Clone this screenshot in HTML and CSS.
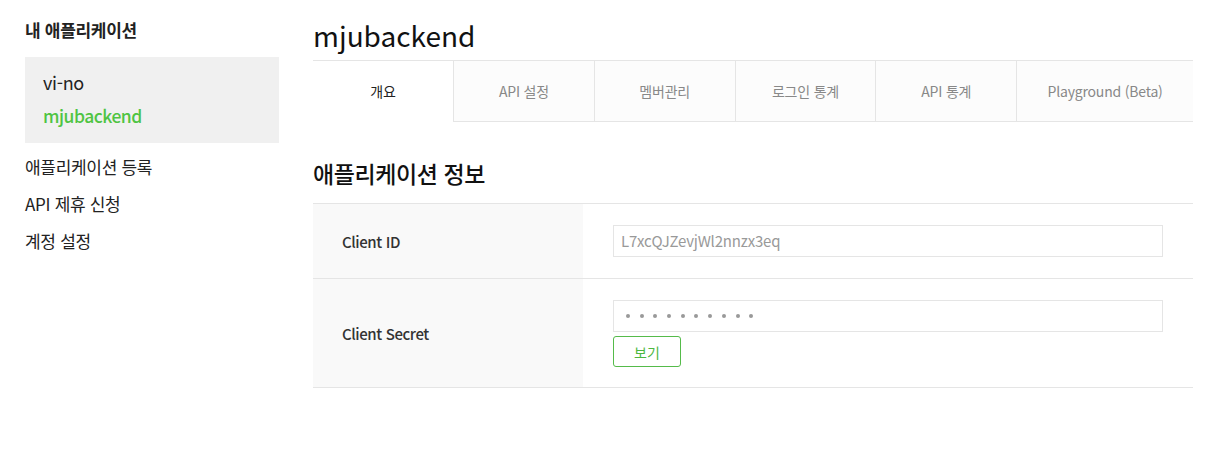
FILE: index.html
```html
<!DOCTYPE html>
<html lang="ko">
<head>
<meta charset="utf-8">
<title>mjubackend</title>
<link rel="stylesheet" href="styles.css">
</head>
<body>
<div class="page">
  <aside class="sidebar">
    <h2 class="side-title">내 애플리케이션</h2>
    <div class="app-box">
      <div class="app-item">vi-no</div>
      <div class="app-item active">mjubackend</div>
    </div>
    <ul class="side-menu">
      <li>애플리케이션 등록</li>
      <li>API 제휴 신청</li>
      <li>계정 설정</li>
    </ul>
  </aside>
  <main class="main">
    <h1 class="app-title">mjubackend</h1>
    <ul class="tabs">
      <li class="tab active">개요</li>
      <li class="tab">API 설정</li>
      <li class="tab">멤버관리</li>
      <li class="tab">로그인 통계</li>
      <li class="tab">API 통계</li>
      <li class="tab last">Playground (Beta)</li>
    </ul>
    <h2 class="section-title">애플리케이션 정보</h2>
    <div class="info-table">
      <div class="row row-id">
        <div class="label">Client ID</div>
        <div class="value">
          <div class="field">L7xcQJZevjWl2nnzx3eq</div>
        </div>
      </div>
      <div class="row row-secret">
        <div class="label">Client Secret</div>
        <div class="value">
          <div class="field dots">
            <span></span><span></span><span></span><span></span><span></span><span></span><span></span><span></span><span></span><span></span>
          </div>
          <button class="show-btn" type="button">보기</button>
        </div>
      </div>
    </div>
  </main>
</div>
</body>
</html>
```
FILE: styles.css
```css
* { box-sizing: border-box; }
html, body { margin: 0; padding: 0; background: #fff; }
body {
  font-family: "Noto Sans CJK KR", "Noto Sans", sans-serif;
  color: #222;
}
.page {
  display: flex;
  width: 1228px;
}
.sidebar {
  width: 279px;
  padding-left: 25px;
  flex: none;
}
.side-title {
  margin: 20px 0 0;
  font-size: 17px;
  line-height: 20px;
  font-weight: 700;
  color: #222;
  letter-spacing: -0.3px;
}
.app-box {
  margin-top: 17px;
  background: #f0f0f0;
  padding: 8px 18px 10px;
  height: 86px;
}
.app-item {
  font-size: 18px;
  line-height: 34px;
  color: #222;
  letter-spacing: -0.3px;
}
.app-item.active {
  color: #4fc443;
  font-weight: 500;
  font-size: 17.5px;
  letter-spacing: -0.5px;
}
.side-menu {
  list-style: none;
  margin: 5px 0 0;
  padding: 0;
}
.side-menu li {
  font-size: 17px;
  line-height: 37px;
  color: #222;
  letter-spacing: -0.3px;
}
.main {
  margin-left: 34px;
  width: 880px;
  flex: none;
}
.app-title {
  margin: 15px 0 5px;
  font-size: 28px;
  line-height: 40px;
  font-weight: 400;
  color: #111;
  letter-spacing: 0;
}
.tabs {
  list-style: none;
  margin: 0;
  padding: 0;
  display: flex;
  border-top: 1px solid #e5e5e5;
  height: 62px;
}
.tab {
  width: 140.8px;
  flex: none;
  display: flex;
  align-items: center;
  justify-content: center;
  font-size: 14px;
  color: #888;
  background: #fcfcfc;
  border-left: 1px solid #e5e5e5;
  border-bottom: 1px solid #e5e5e5;
  letter-spacing: -0.2px;
}
.tab.active {
  width: 140px;
  border-left: none;
  border-bottom-color: transparent;
  background: #fff;
  color: #222;
}
.tab.last { flex: 1; width: auto; }
.section-title {
  margin: 35px 0 14px;
  font-size: 23px;
  line-height: 32px;
  font-weight: 500;
  color: #111;
  letter-spacing: -0.4px;
}
.info-table {
  border-top: 1px solid #e5e5e5;
}
.row {
  display: flex;
  border-bottom: 1px solid #e5e5e5;
}
.label {
  width: 270px;
  flex: none;
  background: #f9f9f9;
  padding-left: 29px;
  display: flex;
  align-items: center;
  font-size: 15px;
  font-weight: 500;
  color: #333;
  letter-spacing: -0.4px;
}
.value {
  padding: 21px 30px 20px;
  flex: 1;
}
.row-id .value { padding-bottom: 21px; }
.field {
  width: 550px;
  height: 32px;
  border: 1px solid #e5e5e5;
  padding-left: 7px;
  font-size: 15px;
  line-height: 30px;
  color: #999;
  letter-spacing: -0.2px;
}
.dots {
  display: flex;
  align-items: center;
  gap: 9.7px;
  padding-left: 12px;
}
.dots span {
  width: 4px;
  height: 4px;
  border-radius: 50%;
  background: #999;
}
.show-btn {
  display: block;
  margin-top: 4px;
  width: 68px;
  height: 31px;
  border: 1px solid #55bb4a;
  border-radius: 3px;
  background: #fff;
  color: #4cb83f;
  font-family: inherit;
  font-size: 14px;
  padding: 0;
  cursor: pointer;
}
```
